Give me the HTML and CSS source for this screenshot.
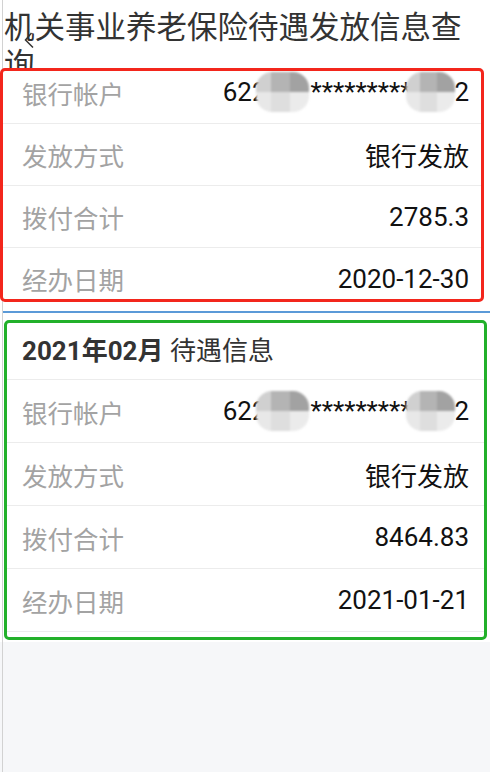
FILE: index.html
```html
<!DOCTYPE html>
<html lang="zh-CN">
	<head>
		<meta charset="UTF-8" />
		<meta name="viewport" content="width=device-width, initial-scale=1.0" />
		<title>待遇发放信息查询</title>
		<link rel="stylesheet" href="styles.css">
	</head>
	<body>
		<div class="page">
			<div class="title-bar">
				<h1 class="title">机关事业养老保险待遇发放信息查询</h1>
				<svg class="back" width="11" height="17" viewBox="0 0 11 17">
					<polyline points="7.5,1 1.5,8 9,15.5" fill="none" stroke="#333" stroke-width="1.5" />
				</svg>
			</div>

			<!-- 上一期 -->
			<div class="card card-red">
				<div class="row row-cut">
					<span class="label">银行帐户</span>
					<span class="value account">622<i class="blur"></i>*********<i class="blur blur-b"></i>2</span>
				</div>
				<div class="row">
					<span class="label">发放方式</span>
					<span class="value">银行发放</span>
				</div>
				<div class="row">
					<span class="label">拨付合计</span>
					<span class="value">2785.3</span>
				</div>
				<div class="row">
					<span class="label">经办日期</span>
					<span class="value">2020-12-30</span>
				</div>
			</div>

			<div class="split"></div>

			<!-- 2021年02月 -->
			<div class="card card-green">
				<div class="card-head"><b>2021年02月</b> 待遇信息</div>
				<div class="row">
					<span class="label">银行帐户</span>
					<span class="value account">622<i class="blur"></i>*********<i class="blur blur-b"></i>2</span>
				</div>
				<div class="row">
					<span class="label">发放方式</span>
					<span class="value">银行发放</span>
				</div>
				<div class="row">
					<span class="label">拨付合计</span>
					<span class="value">8464.83</span>
				</div>
				<div class="row">
					<span class="label">经办日期</span>
					<span class="value">2021-01-21</span>
				</div>
			</div>
		</div>
	</body>
</html>
```

FILE: styles.css
```css
* {
	margin: 0;
	padding: 0;
	box-sizing: border-box;
}
body {
	width: 490px;
	height: 772px;
	overflow: hidden;
	font-family: Roboto, "Noto Sans CJK SC", sans-serif;
	background: linear-gradient(to right, transparent 2px, #d2d2d2 2px, #d2d2d2 3px, transparent 3px), #f6f7f9;
}
.page {
	background: linear-gradient(to right, transparent 2px, #d2d2d2 2px, #d2d2d2 3px, transparent 3px), #fff;
	padding-bottom: 2px;
}
.title-bar {
	height: 68px;
	overflow: hidden;
	position: relative;
}
.title {
	padding: 7px 0 0 4px;
	font-size: 30.5px;
	line-height: 37px;
	font-weight: normal;
	color: #333;
	font-family: "Noto Sans CJK SC", sans-serif;
}
.back {
	position: absolute;
	left: 24px;
	top: 32px;
}
.card {
	background: #fff;
	border-radius: 5px;
	overflow: hidden;
}
.card-red {
	width: 484px;
	height: 234px;
	border: 3px solid #f3261c;
}
.card-green {
	width: 483px;
	margin-left: 4px;
	border: 3px solid #22b02a;
	padding-bottom: 5px;
}
.row {
	display: flex;
	justify-content: space-between;
	align-items: center;
	height: 62px;
	border-bottom: 1px solid #ececec;
	font-size: 26px;
}
.card-red .row {
	padding: 0 12px 0 19px;
}
.card-red .row-cut {
	height: 53px;
	padding-bottom: 10px;
}
.card-green .row {
	height: 63px;
	padding: 0 15px;
}
.card-head {
	height: 57px;
	padding: 0 15px 5px;
	display: flex;
	align-items: center;
	border-bottom: 1px solid #ececec;
	font-size: 26px;
	color: #333;
	white-space: pre;
}
.card-head b {
	font-weight: bold;
}
.label {
	font-size: 25.5px;
	color: #a3a3a3;
	font-family: "Noto Sans CJK SC", sans-serif;
}
.value {
	color: #111;
}
.account {
	display: flex;
	align-items: center;
}
.blur {
	display: inline-block;
	width: 53px;
	height: 40px;
	margin: 0 2px 0 -11px;
	border-radius: 16px;
	filter: blur(0.8px);
	background:
		linear-gradient(to right, #d0d0d0 0 28%, #b4b4b4 28% 64%, #a2a2a2 64% 100%) top / 100% 50% no-repeat,
		linear-gradient(to right, #e8e8e8 0 28%, #dedede 28% 64%, #ebebeb 64% 100%) bottom / 100% 50% no-repeat;
}
.blur-b {
	width: 49px;
	margin: 0 -1px 0 -5px;
}
.split {
	height: 2px;
	margin: 9px 0 7px 3px;
	background: #5b9ad8;
}
```
